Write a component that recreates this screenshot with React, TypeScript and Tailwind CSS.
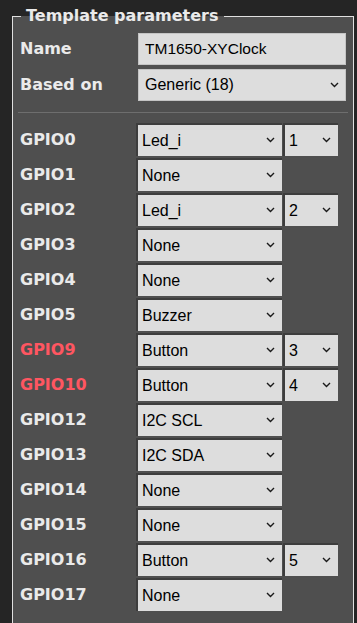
import { useState } from 'react';

type GpioRow = {
  name: string;
  value: string;
  idx?: string;
  warn?: boolean;
};

const components = ['None', 'Led_i', 'Buzzer', 'Button', 'I2C SCL', 'I2C SDA', 'Relay', 'Switch'];
const indexes = ['1', '2', '3', '4', '5', '6', '7', '8'];

const gpios: GpioRow[] = [
  { name: 'GPIO0', value: 'Led_i', idx: '1' },
  { name: 'GPIO1', value: 'None' },
  { name: 'GPIO2', value: 'Led_i', idx: '2' },
  { name: 'GPIO3', value: 'None' },
  { name: 'GPIO4', value: 'None' },
  { name: 'GPIO5', value: 'Buzzer' },
  { name: 'GPIO9', value: 'Button', idx: '3', warn: true },
  { name: 'GPIO10', value: 'Button', idx: '4', warn: true },
  { name: 'GPIO12', value: 'I2C SCL' },
  { name: 'GPIO13', value: 'I2C SDA' },
  { name: 'GPIO14', value: 'None' },
  { name: 'GPIO15', value: 'None' },
  { name: 'GPIO16', value: 'Button', idx: '5' },
  { name: 'GPIO17', value: 'None' },
];

const Chevron = () => (
  <svg
    className="pointer-events-none absolute right-[7px] top-1/2 -translate-y-1/2"
    width="9"
    height="6"
    viewBox="0 0 9 6"
  >
    <polyline points="1,1 4.5,4.5 8,1" fill="none" stroke="#1a1a1a" strokeWidth="1.4" />
  </svg>
);

interface DropProps {
  value: string;
  options: string[];
  className: string;
  inset?: boolean;
}

const Drop: React.FC<DropProps> = ({ value, options, className, inset = true }) => {
  const [v, setV] = useState(value);
  return (
    <div className={`relative ${className}`}>
      <select
        value={v}
        onChange={(e) => setV(e.target.value)}
        className={`h-full w-full appearance-none bg-[#dddddd] text-[16px] text-black outline-none ${
          inset ? 'border-l-2 border-t-2 border-[#3d3d3d] pl-[4px]' : 'border border-[#c4c4c4] pl-[6px]'
        }`}
        style={{ fontFamily: '"Liberation Sans", Arial, sans-serif' }}
      >
        {options.map((o) => (
          <option key={o} value={o}>
            {o}
          </option>
        ))}
      </select>
      <Chevron />
    </div>
  );
};

export default function App() {
  const [name, setName] = useState('TM1650-XYClock');

  return (
    <div
      className="min-h-screen bg-[#252525] pl-[12px] pt-[6px]"
      style={{ fontFamily: '"DejaVu Sans", Verdana, sans-serif' }}
    >
      <fieldset className="w-[335px] border border-[#e0e0e0] bg-[#4f4f4f] pb-[20px]">
        <legend className="ml-[8px] px-[5px] text-[16px] font-bold leading-[20px] text-[#eaeaea]">
          Template parameters
        </legend>

        <div className="px-[7px] pt-[7px]">
          <div className="flex h-[32px] items-center">
            <span className="w-[118px] text-[16px] font-bold text-[#eaeaea]">Name</span>
            <input
              value={name}
              onChange={(e) => setName(e.target.value)}
              className="h-full flex-1 border border-[#c4c4c4] bg-[#dddddd] pl-[6px] text-[15.5px] text-black outline-none"
              style={{ fontFamily: '"Liberation Sans", Arial, sans-serif' }}
            />
          </div>
          <div className="mt-[4px] flex h-[32px] items-center">
            <span className="w-[118px] text-[16px] font-bold text-[#eaeaea]">Based on</span>
            <Drop
              value="Generic (18)"
              options={['Generic (18)', 'Sonoff Basic (1)', 'Sonoff RF (2)']}
              className="h-full flex-1"
              inset={false}
            />
          </div>

          <div className="mx-[-2px] mt-[11px] h-px bg-[#6e6e6e]" />

          <div className="mt-[10px] flex flex-col gap-[2px]">
            {gpios.map((g) => (
              <div key={g.name} className="flex h-[33px] items-center">
                <span
                  className={`w-[116px] text-[16px] font-bold ${
                    g.warn ? 'text-[#ff5661]' : 'text-[#eaeaea]'
                  }`}
                >
                  {g.name}
                </span>
                <Drop value={g.value} options={components} className="h-full w-[146px]" />
                {g.idx && (
                  <Drop value={g.idx} options={indexes} className="ml-[1px] h-full w-[55px]" />
                )}
              </div>
            ))}
          </div>
        </div>
      </fieldset>
    </div>
  );
}
